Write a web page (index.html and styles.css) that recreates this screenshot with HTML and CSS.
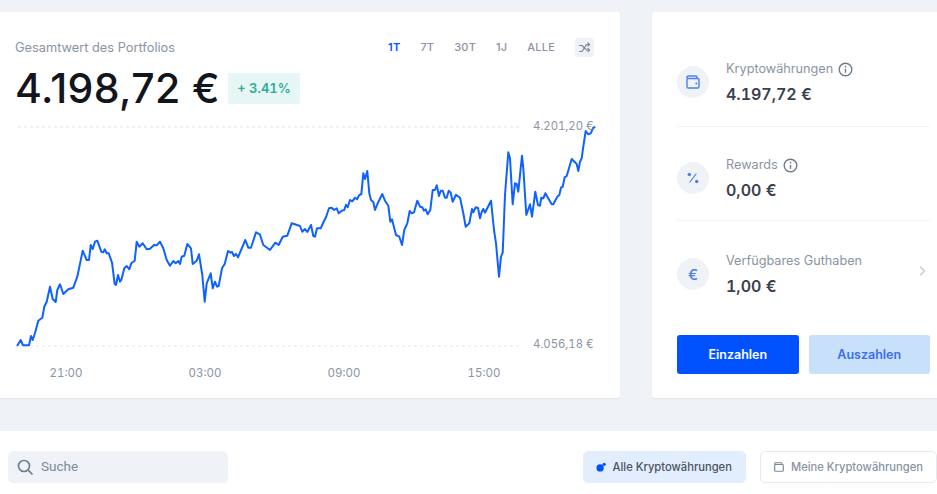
FILE: index.html
```html
<!DOCTYPE html>
<html lang="de">
<head>
    <meta charset="UTF-8">
    <meta name="viewport" content="width=device-width, initial-scale=1.0">
    <title>Portfolio</title>
    <link rel="stylesheet" href="styles.css">
</head>
<body>
<div class="top">
    <section class="card chart-card">
        <div class="chart-head">
            <div>
                <div class="total-label">Gesamtwert des Portfolios</div>
                <div class="total-row">
                    <span class="total">4.198,72 €</span>
                    <span class="badge">+ 3.41%</span>
                </div>
            </div>
            <div class="ranges">
                <span class="range active">1T</span>
                <span class="range">7T</span>
                <span class="range">30T</span>
                <span class="range">1J</span>
                <span class="range">ALLE</span>
                <span class="compare">
                    <svg width="13" height="13" viewBox="0 0 13 13" fill="none" stroke="#7d8898" stroke-width="1.200" stroke-linecap="round" stroke-linejoin="round">
                        <path d="M1.500 4.500H4L8.500 9H11.500"/>
                        <path d="M1.500 10.500H4L8.500 3.500H11.500"/>
                        <path d="M10 2L11.500 3.500L10 5M10 7.500L11.500 9L10 10.500"/>
                    </svg>
                </span>
            </div>
        </div>
        <svg class="chart" width="620" height="292" viewBox="0 106 620 292">
            <line class="grid" x1="18" y1="127" x2="520" y2="127"/>
            <line class="grid" x1="18" y1="346" x2="520" y2="346"/>
            <polyline class="line" points="17,346 20.700,340 23,345.300 29,345.300 31,336 32.700,340 35,333 38.300,320.700 42.300,317.700 44.300,306.700 46.700,301.700 50,286.700 52.700,299 55.700,302 57.300,290 60,284.300 63.300,294 68.300,289.300 73.300,287.700 77.300,276.700 82.700,250.700 86.700,260 89,260 90.700,245 92.700,249 95,241.700 97.300,240.700 101.300,251.700 103.300,252.300 104.700,249.300 106.700,253.300 108.700,253.300 112,262.700 114.700,284 116,285 118,275 120,281.700 121.300,280 124.300,268.300 126.700,266 129.300,269.300 131.300,263.300 134.700,260.700 136.700,241.700 139.300,246.700 142.700,243.300 146.700,249.300 150,248.700 154,245 156.700,245.300 160,241.700 163.300,248.300 166.700,260 170,265.700 173.300,261 175.700,263.300 178.300,261 180,264 181.700,256.700 184.300,255.700 187.300,244 191,248.300 192.700,264 196.700,260.700 199,254.300 202.300,275 204.700,301.700 206.700,283.300 210.700,273.300 212.700,288.300 215,281.700 217,286.700 218.700,286 222,268.300 224.700,264 228,251 230.700,252.700 232,252 234,256 236,254 238,257.300 245.300,240 248.300,247.700 251,247.700 256,232.300 260,234.700 263.300,245 270,250 275.300,242.700 278.700,245 282.700,236.700 287.300,235.700 291.700,223.300 300,226 302.300,231.700 305,229 307.300,232 311,225 313.300,236 315,236.700 317,228.300 320.700,228.300 324,221 326,217.300 329,208.300 331.700,207.700 334,210 336.700,208.300 338.700,213.300 341.700,210.700 344.300,210 346,204.700 347.700,207.300 350,200 352.300,201.300 355,197.700 357,199.300 359.300,195 361.300,194.300 363.300,173.300 365,179 367.300,171 369.300,193.300 371,200 373.300,202 375,210 377.700,203.300 382.300,194 385,200.700 388.300,205.700 390.300,221.700 392,219.300 396,235 399.300,236.700 402,245 404.300,230 407.300,223.300 409.700,211 411.700,213.300 414,212.300 417.300,200.700 420,206.700 422.300,207.300 424,210.700 425.700,209.300 427.700,214.300 430.300,210 432.700,190 435,190 436.700,185.300 439,196 440.700,190.700 442.700,190.700 445,197.700 446.700,197.700 448.700,190.700 450.700,192.700 452.700,201.700 456,194.700 460,197.700 463.300,213.300 465.700,226.700 469.300,223.300 472,209 473.300,212.300 475.700,207.300 478,208 480,218.300 481.700,212 483.300,209 485,212.700 491,200.700 494,230 496,243.300 499,276.700 501,256.700 502.700,252.700 505,195 508.300,152.300 510,158.300 512.700,204.300 515,183.300 516.700,184 518.300,191.700 522,155.700 523.300,168.300 526.300,215 530,204.300 532,216.700 535.300,191.700 538,205 540,205.700 541.300,197.700 543.300,198.300 545.300,193.300 551.700,204.300 553.300,204.300 557.300,196.700 559.300,195 561,187.700 562.700,186.700 564.700,177.300 566.700,176 571.700,159 576.700,164 578.300,171 580,161.700 581.700,158.300 583.300,146.700 585.700,131 588.300,134.300 590.700,133.300 593.300,127.700 595.300,127"/>
            <text class="axis price" x="533" y="130">4.201,20 €</text>
            <text class="axis price" x="533" y="348">4.056,18 €</text>
            <text class="axis" x="66" y="377" text-anchor="middle">21:00</text>
            <text class="axis" x="205" y="377" text-anchor="middle">03:00</text>
            <text class="axis" x="344" y="377" text-anchor="middle">09:00</text>
            <text class="axis" x="484" y="377" text-anchor="middle">15:00</text>
        </svg>
    </section>

    <aside class="card balance-card">
        <div class="balance-row first">
            <span class="round-icon">
                <svg width="14" height="14" viewBox="0 0 14 14" fill="none" stroke="#4d7df5" stroke-width="1.400" stroke-linejoin="round">
                    <path d="M1 3.500V2.200C1 1.500 1.500 1 2.200 1h7.600C10.500 1 11 1.500 11 2.200V3.500"/>
                    <rect x="1" y="3.500" width="12" height="9.500" rx="1.200"/>
                    <circle cx="10.300" cy="8.500" r="1" fill="#4d7df5" stroke="none"/>
                </svg>
            </span>
            <div class="balance-text">
                <div class="balance-label">Kryptowährungen
                    <svg class="info" width="15" height="15" viewBox="0 0 15 15" fill="none" stroke="#6f7b8b" stroke-width="1.400">
                        <circle cx="7.500" cy="7.500" r="6.300"/>
                        <path d="M7.500 6.800v4"/>
                        <circle cx="7.500" cy="4.600" r=".9" fill="#6f7b8b" stroke="none"/>
                    </svg>
                </div>
                <div class="balance-value">4.197,72 €</div>
            </div>
        </div>
        <div class="balance-row">
            <span class="round-icon">
                <svg width="12" height="12" viewBox="0 0 12 12" fill="#4d7df5">
                    <circle cx="2.300" cy="2.500" r="1.700"/>
                    <circle cx="9.700" cy="9.500" r="1.700"/>
                    <path d="M3 10l6-8" stroke="#4d7df5" stroke-width="1.200" fill="none" stroke-linecap="round"/>
                </svg>
            </span>
            <div class="balance-text">
                <div class="balance-label">Rewards
                    <svg class="info" width="15" height="15" viewBox="0 0 15 15" fill="none" stroke="#6f7b8b" stroke-width="1.400">
                        <circle cx="7.500" cy="7.500" r="6.300"/>
                        <path d="M7.500 6.800v4"/>
                        <circle cx="7.500" cy="4.600" r=".9" fill="#6f7b8b" stroke="none"/>
                    </svg>
                </div>
                <div class="balance-value">0,00 €</div>
            </div>
        </div>
        <div class="balance-row last">
            <span class="round-icon euro">€</span>
            <div class="balance-text">
                <div class="balance-label">Verfügbares Guthaben</div>
                <div class="balance-value">1,00 €</div>
            </div>
            <svg class="chevron" width="7" height="10" viewBox="0 0 7 10" fill="none" stroke="#c3cbd8" stroke-width="1.400" stroke-linecap="round" stroke-linejoin="round">
                <path d="M1.500 1l4 4-4 4"/>
            </svg>
        </div>
        <div class="actions">
            <button class="btn primary">Einzahlen</button>
            <button class="btn soft">Auszahlen</button>
        </div>
    </aside>
</div>

<div class="toolbar">
    <label class="search">
        <svg width="16" height="16" viewBox="0 0 16 16" fill="none" stroke="#6f7f93" stroke-width="1.700" stroke-linecap="round">
            <circle cx="7" cy="7" r="5.500"/>
            <path d="M11.200 11.200L15 15"/>
        </svg>
        <span>Suche</span>
    </label>
    <div class="filters">
        <button class="filter active">
            <svg width="10" height="10" viewBox="0 0 11 11" fill="#0052ff">
                <circle cx="4.500" cy="6.500" r="4"/>
                <circle cx="9" cy="2.500" r="1.800"/>
            </svg>
            Alle Kryptowährungen
        </button>
        <button class="filter">
            <svg width="10" height="10" viewBox="0 0 14 14" fill="none" stroke="#7d8898" stroke-width="1.600" stroke-linejoin="round">
                <path d="M1 3.500V2.200C1 1.500 1.500 1 2.200 1h7.600C10.500 1 11 1.500 11 2.200V3.500"/>
                <rect x="1" y="3.500" width="12" height="9.500" rx="1.200"/>
            </svg>
            Meine Kryptowährungen
        </button>
    </div>
</div>
</body>
</html>
```

FILE: styles.css
```css
html, body {
    height: 100%;
}

body {
    margin: 0;
    height: 494px;
    overflow: hidden;
    display: flex;
    flex-direction: column;
    font-family: Inter, "Liberation Sans", sans-serif;
    background-color: #eff2f7;
}

.top {
    display: flex;
    gap: 32px;
    padding-top: 12px;
}

.card {
    height: 386px;
    background-color: #fff;
    border-radius: 3px;
    box-shadow: 0 1px 2px rgba(56, 65, 74, 0.08);
    box-sizing: border-box;
}

/* chart card */
.chart-card {
    width: 620px;
    flex: none;
    display: flex;
    flex-direction: column;
    border-radius: 0 3px 3px 0;
}

.chart-head {
    height: 94px;
    display: flex;
    justify-content: space-between;
    align-items: flex-start;
    padding: 26px 26px 0 15px;
    box-sizing: border-box;
}

.total-label {
    margin-top: 1px;
    font-size: 12.800px;
    line-height: 18px;
    color: #8a94a3;
}

.total-row {
    display: flex;
    align-items: center;
    gap: 8px;
    margin-top: 14px;
}

.total {
    font-size: 41px;
    line-height: 34px;
    font-weight: 500;
    letter-spacing: 0.4px;
    color: #12161c;
}

.badge {
    width: 72px;
    text-align: center;
    line-height: 31px;
    font-size: 13px;
    font-weight: 600;
    font-variant-numeric: tabular-nums;
    color: #2dac97;
    background-color: #e6f6f4;
    border-radius: 2px;
}

.ranges {
    display: flex;
    align-items: center;
    gap: 20px;
}

.range {
    font-size: 11px;
    font-weight: 500;
    line-height: 19px;
    color: #8a94a3;
    letter-spacing: 0.2px;
}

.range.active {
    color: #0052ff;
    font-weight: 600;
}

.compare {
    width: 19px;
    height: 19px;
    display: flex;
    align-items: center;
    justify-content: center;
    background-color: #eff2f7;
    border-radius: 3px;
}

.chart {
    display: block;
}

.grid {
    stroke: #dfe3ea;
    stroke-width: 1;
    stroke-dasharray: 3 3;
}

.line {
    fill: none;
    stroke: #0f62fe;
    stroke-width: 2;
    stroke-linejoin: round;
}

.axis {
    font-size: 11.500px;
    font-variant-numeric: tabular-nums;
    fill: #8a94a3;
}

.price {
    font-size: 11.300px;
}

/* balances */
.balance-card {
    width: 285px;
    flex: none;
    padding: 21px 7px 0 25px;
    border-radius: 3px 0 0 3px;
}

.balance-row {
    height: 94px;
    display: flex;
    align-items: flex-start;
    padding-top: 35px;
    box-sizing: border-box;
    border-bottom: 1px solid #f2f4f7;
}

.balance-row.first {
    padding-top: 33px;
}

.balance-row.last {
    border-bottom: none;
    padding-top: 37px;
}

.round-icon {
    width: 32px;
    height: 32px;
    flex: none;
    display: flex;
    align-items: center;
    justify-content: center;
    background-color: #eff2f7;
    border-radius: 50%;
}

.euro {
    font-size: 15px;
    font-weight: 500;
    color: #4d7df5;
}

.balance-text {
    margin: -7px 0 0 17px;
    flex: 1;
}

.balance-label {
    display: flex;
    align-items: center;
    gap: 5px;
    font-size: 12.700px;
    line-height: 20px;
    color: #8a94a3;
}

.balance-value {
    margin-top: 2px;
    font-size: 16px;
    line-height: 26px;
    font-weight: 600;
    font-variant-numeric: tabular-nums;
    color: #39424e;
}

.chevron {
    margin: 8px 4px 0 0;
}

.actions {
    display: flex;
    gap: 10px;
    margin-top: 20px;
}

.btn {
    height: 39px;
    flex: 1;
    border: none;
    border-radius: 3px;
    font-family: inherit;
    font-size: 12.500px;
    font-weight: 600;
}

.primary {
    color: #fff;
    background-color: #0052ff;
}

.soft {
    color: #3a6df0;
    background-color: #c9e0fb;
}

/* bottom bar */
.toolbar {
    flex: 1;
    margin-top: 33px;
    display: flex;
    justify-content: space-between;
    align-items: flex-start;
    padding: 20px 0 0 8px;
    background-color: #fff;
}

.search {
    width: 220px;
    height: 32px;
    box-sizing: border-box;
    display: flex;
    align-items: center;
    gap: 8px;
    padding-left: 9px;
    font-family: Roboto, sans-serif;
    font-size: 13.500px;
    color: #7d8a9c;
    background-color: #eff2f7;
    border-radius: 6px;
}

.search span {
    margin-bottom: 2px;
}

.filters {
    display: flex;
    gap: 14px;
}

.filter {
    height: 32px;
    display: flex;
    align-items: center;
    gap: 7px;
    padding: 0 13px;
    box-sizing: border-box;
    border: 1px solid #e6e9ef;
    border-radius: 5px;
    background-color: #fff;
    font-family: inherit;
    font-size: 11.200px;
    font-weight: 500;
    color: #8a94a3;
}

.filter.active {
    padding-left: 12px;
    border-color: #e2eefd;
    background-color: #e2eefd;
    color: #4a5462;
}
```
